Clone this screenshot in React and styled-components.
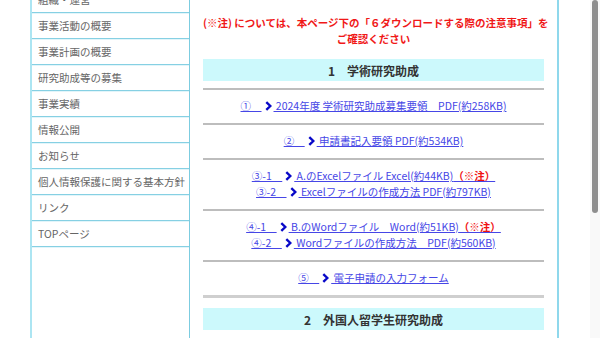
import styled, { createGlobalStyle } from 'styled-components';

const GlobalStyle = createGlobalStyle`
  html, body {
    margin: 0;
    padding: 0;
    background: #fff;
    overflow: hidden;
  }
  body {
    font-family: "Noto Sans CJK JP", "Noto Sans", sans-serif;
  }
`

const Page = styled.div`
  display: flex;
  align-items: stretch;
  padding-left: 30px;
  margin-top: -13px;
  min-height: 360px;
`

const Sidebar = styled.nav`
  width: 157px;
  border-left: 2px solid #ace5f2;
  border-right: 1px solid #7ccce0;
  ul {
    list-style: none;
    margin: 0;
    padding: 0;
  }
`

const NavItem = styled.li`
  height: 25px;
  display: flex;
  align-items: center;
  padding-left: 6px;
  border-bottom: 1px solid #86d0e3;
  box-shadow: 0 1px 0 #e2f5fa;
  font-size: 10.5px;
  color: #666;
  white-space: nowrap;
`

const Main = styled.main`
  width: 369px;
  box-sizing: border-box;
  border-right: 2px solid #8fd8ec;
  padding: 28px 13px 0 13px;
`

const Notice = styled.p`
  margin: 0 0 13px;
  text-align: center;
  color: #f01818;
  font-weight: bold;
  font-size: 10.5px;
  line-height: 15.5px;
  white-space: nowrap;
`

const SectionHead = styled.h3`
  margin: 0 0 7px;
  height: 22px;
  display: flex;
  align-items: center;
  justify-content: center;
  background: #ccf9fc;
  color: #333;
  font-size: 12px;
  font-weight: bold;
  white-space: pre;
`

const LinkGroup = styled.div`
  border-top: ${p => p.$last ? '3px solid #cfcfcf' : '2px solid #bdbdbd'};
  padding: 8px 0 9px;
  text-align: center;
  font-size: 10.5px;
  line-height: 16px;
  ${p => p.$last && 'padding: 0; margin-bottom: 10px;'}
`

const Line = styled.div`
  white-space: pre;
`

const Link = styled.a`
  color: #4646e6;
  text-decoration: underline;
  cursor: pointer;
`

const Arrow = styled.span`
  display: inline-block;
  color: #0808c8;
  margin: 0 2px 0 3px;
  vertical-align: -1px;
  svg {
    display: block;
    width: 7px;
    height: 10px;
  }
`

const Caution = styled.span`
  color: #f01010;
  font-weight: bold;
`

const Scrollbar = styled.div`
  position: fixed;
  top: 0;
  right: 0;
  width: 10px;
  height: 100%;
  background: #f9f9f9;
  div {
    margin-left: 2px;
    width: 6px;
    height: 213px;
    background: #8f8f8f;
    border-radius: 3px;
  }
`

const Chevron = () => (
  <svg viewBox="0 0 7 10">
    <polyline points="1.3,1.2 5.3,5 1.3,8.8" fill="none" stroke="currentColor" strokeWidth="2.4" />
  </svg>
)

const nav = [
  '組織・運営',
  '事業活動の概要',
  '事業計画の概要',
  '研究助成等の募集',
  '事業実績',
  '情報公開',
  'お知らせ',
  '個人情報保護に関する基本方針',
  'リンク',
  'TOPページ',
]

const groups = [
  [{ no: '①　', text: ' 2024年度 学術研究助成募集要領　PDF(約258KB)' }],
  [{ no: '②　', text: ' 申請書記入要領 PDF(約534KB)' }],
  [
    { no: '③-1　', text: ' A.のExcelファイル Excel(約44KB)', caution: true },
    { no: '③-2　', text: ' Excelファイルの作成方法 PDF(約797KB)' },
  ],
  [
    { no: '④-1　', text: ' B.のWordファイル　Word(約51KB)', caution: true },
    { no: '④-2　', text: ' Wordファイルの作成方法　PDF(約560KB)' },
  ],
  [{ no: '⑤　', text: ' 電子申請の入力フォーム' }],
]

export default function App() {
  return (
    <>
      <GlobalStyle />
      <Page>
        <Sidebar>
          <ul>
            {nav.map(item => <NavItem key={item}>{item}</NavItem>)}
          </ul>
        </Sidebar>
        <Main>
          <Notice>
            (※注) については、本ページ下の「６ダウンロードする際の注意事項」を<br />
            ご確認ください
          </Notice>
          <SectionHead>{'1　学術研究助成'}</SectionHead>
          {groups.map((group, i) => (
            <LinkGroup key={i}>
              {group.map(link => (
                <Line key={link.no}>
                  <Link>{link.no}</Link>
                  <Arrow><Chevron /></Arrow>
                  <Link>
                    {link.text}
                    {link.caution && <Caution>（※注）</Caution>}
                  </Link>
                </Line>
              ))}
            </LinkGroup>
          ))}
          <LinkGroup $last />
          <SectionHead>{'2　外国人留学生研究助成'}</SectionHead>
        </Main>
      </Page>
      <Scrollbar><div /></Scrollbar>
    </>
  )
}
